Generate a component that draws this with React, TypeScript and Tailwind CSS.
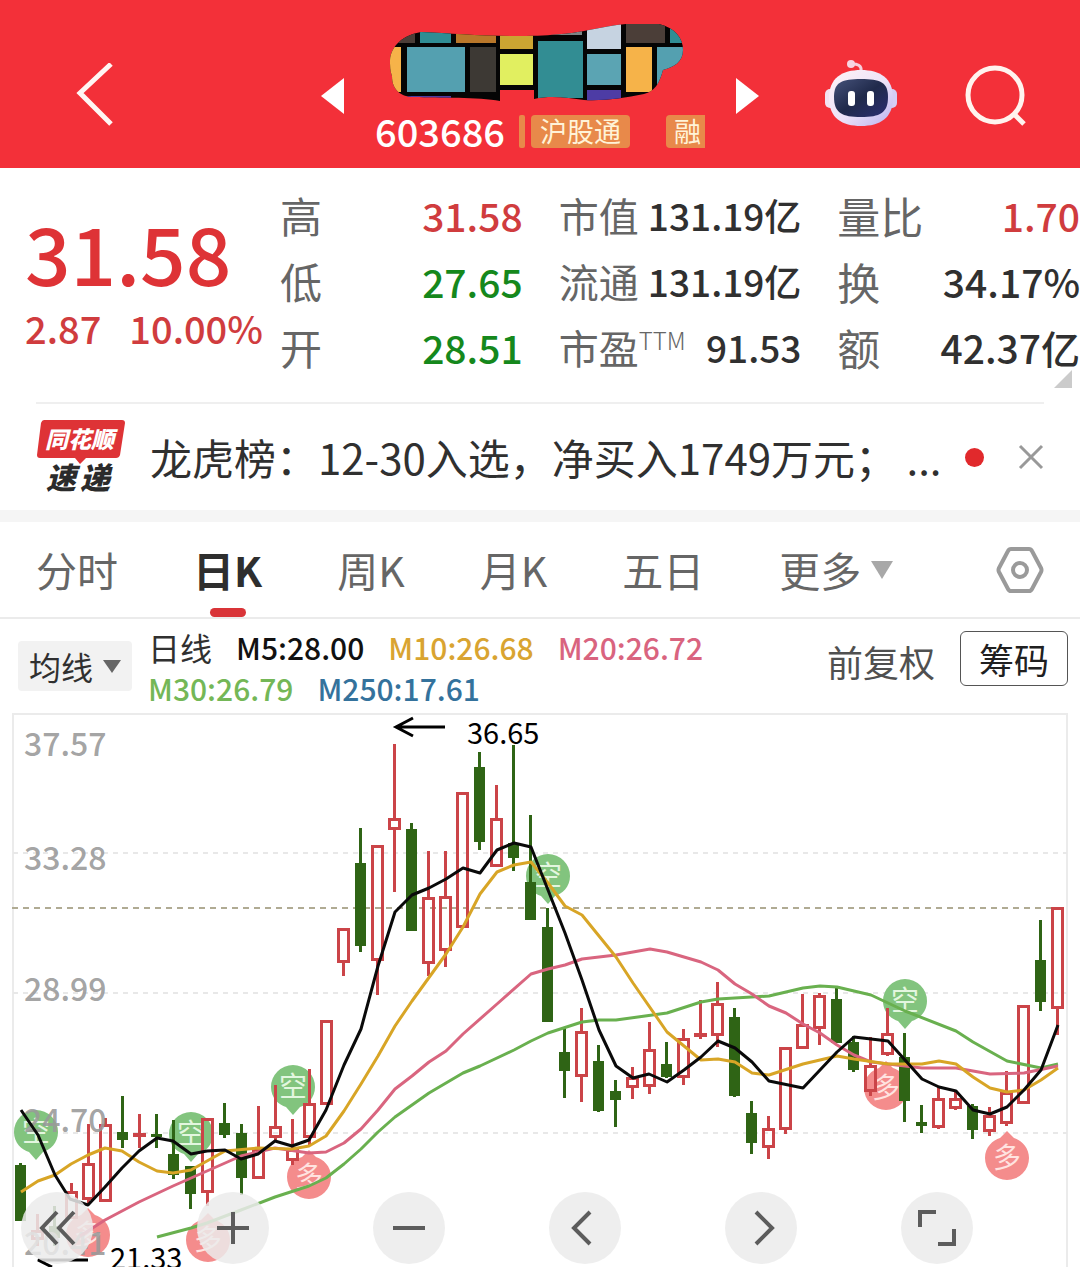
import { useState } from "react";

type Candle = [color: "r" | "g", high: number, top: number, bottom: number, low: number];

const candles: Candle[] = [
  ["g", 1163, 1165, 1221, 1221],
  ["r", 1214, 1230, 1240, 1246],
  ["g", 1206, 1226, 1238, 1246],
  ["r", 1183, 1191, 1219, 1219],
  ["r", 1124, 1163, 1200, 1204],
  ["r", 1118, 1124, 1202, 1202],
  ["g", 1096, 1132, 1140, 1148],
  ["r", 1114, 1133, 1137, 1148],
  ["g", 1114, 1134, 1137, 1148],
  ["g", 1120, 1154, 1175, 1179],
  ["g", 1166, 1166, 1194, 1209],
  ["r", 1118, 1118, 1193, 1206],
  ["g", 1103, 1123, 1135, 1138],
  ["g", 1124, 1133, 1178, 1195],
  ["r", 1106, 1148, 1179, 1179],
  ["r", 1085, 1126, 1138, 1140],
  ["r", 1119, 1149, 1161, 1165],
  ["r", 1069, 1103, 1138, 1146],
  ["r", 1020, 1020, 1105, 1105],
  ["r", 928, 928, 963, 976],
  ["g", 828, 863, 946, 952],
  ["r", 845, 845, 961, 995],
  ["r", 744, 818, 830, 892],
  ["g", 823, 829, 931, 931],
  ["r", 851, 897, 964, 976],
  ["r", 851, 896, 951, 967],
  ["r", 792, 792, 928, 928],
  ["g", 752, 767, 842, 850],
  ["r", 785, 818, 867, 867],
  ["g", 745, 843, 858, 871],
  ["g", 815, 882, 920, 920],
  ["g", 908, 927, 1022, 1022],
  ["g", 1028, 1052, 1071, 1098],
  ["r", 1008, 1031, 1077, 1102],
  ["g", 1045, 1061, 1111, 1112],
  ["g", 1080, 1091, 1100, 1127],
  ["r", 1067, 1077, 1088, 1099],
  ["r", 1022, 1049, 1087, 1094],
  ["g", 1042, 1064, 1077, 1078],
  ["r", 1029, 1038, 1078, 1085],
  ["r", 1000, 1033, 1037, 1039],
  ["r", 982, 1003, 1036, 1047],
  ["g", 1008, 1017, 1096, 1097],
  ["g", 1101, 1113, 1143, 1154],
  ["r", 1116, 1128, 1148, 1159],
  ["r", 1047, 1047, 1130, 1134],
  ["r", 994, 1024, 1049, 1049],
  ["r", 993, 995, 1029, 1045],
  ["g", 988, 999, 1043, 1043],
  ["g", 1036, 1042, 1070, 1072],
  ["r", 1037, 1065, 1092, 1096],
  ["r", 1008, 1033, 1055, 1056],
  ["g", 1033, 1057, 1101, 1122],
  ["g", 1105, 1122, 1126, 1133],
  ["r", 1087, 1098, 1128, 1129],
  ["r", 1090, 1098, 1109, 1110],
  ["g", 1104, 1106, 1130, 1139],
  ["r", 1107, 1115, 1132, 1136],
  ["r", 1071, 1092, 1124, 1126],
  ["r", 1005, 1005, 1104, 1104],
  ["g", 920, 960, 1002, 1011],
  ["r", 907, 907, 1009, 1035],
];

const averages = [
  {
    color: "#69b04f",
    points:
      "157,1237 191,1228 207,1223 241,1210 275,1197 309,1186 326,1178 344,1164 361,1149 378,1132 395,1117 429,1093 463,1073 480,1066 514,1050 531,1041 548,1033 582,1022 599,1020 616,1020 667,1013 701,1002 718,999 769,996 803,988 820,986 837,987 871,995 905,1011 956,1031 973,1042 1007,1061 1041,1068 1058,1064",
  },
  {
    color: "#d9657f",
    points:
      "80,1236 105,1220 139,1202 173,1186 207,1171 241,1156 275,1148 309,1153 326,1152 344,1143 361,1129 378,1110 395,1089 412,1076 429,1062 446,1051 463,1034 497,1004 531,974 548,969 565,965 582,959 616,955 650,949 667,952 701,962 718,970 735,984 752,994 769,1006 786,1013 803,1024 820,1033 837,1045 854,1055 871,1062 905,1066 922,1068 956,1068 990,1074 1024,1073 1058,1066",
  },
  {
    color: "#d8a526",
    points:
      "21,1192 38,1181 55,1175 71,1164 88,1155 105,1148 122,1151 139,1162 157,1171 173,1173 191,1170 207,1161 225,1151 258,1148 292,1149 309,1146 326,1136 344,1111 361,1084 378,1056 395,1026 412,1001 446,954 463,927 480,894 497,872 514,865 531,862 548,883 565,906 582,915 599,936 616,957 633,983 667,1032 684,1046 701,1060 718,1059 735,1062 752,1073 769,1075 803,1064 820,1060 837,1056 854,1059 888,1064 922,1064 939,1061 956,1064 973,1077 990,1088 1007,1092 1024,1090 1041,1080 1058,1068",
  },
  {
    color: "#0a0a0a",
    points:
      "21,1110 38,1135 55,1175 70,1199 88,1205 105,1187 122,1168 139,1151 157,1138 173,1141 191,1154 207,1151 225,1150 241,1159 258,1154 275,1141 292,1146 309,1140 326,1110 344,1065 361,1029 378,966 395,912 412,895 429,888 446,879 463,868 480,873 497,850 514,843 531,847 548,890 565,933 582,980 599,1030 616,1066 633,1078 649,1074 667,1082 684,1070 701,1057 718,1041 735,1048 752,1062 769,1081 803,1088 820,1070 837,1052 854,1037 888,1041 905,1060 922,1079 939,1087 956,1091 973,1110 990,1114 1007,1107 1024,1090 1041,1070 1058,1025",
  },
];

const shortPins = [
  [36, 1132],
  [191, 1134],
  [293, 1087],
  [548, 876],
  [905, 1001],
];

const longPins = [
  [88, 1235],
  [208, 1240],
  [309, 1177],
  [886, 1088],
  [1007, 1158],
];

const axisLabels: [string, number][] = [
  ["37.57", 756],
  ["33.28", 870],
  ["28.99", 1001],
  ["24.70", 1132],
  ["20.41", 1255],
];

const quoteColumns = [
  {
    labelClass: "text-[42px]",
    valueClass: "text-[39px]",
    rows: [
      { label: "高", value: "31.58", color: "text-[#d03c3e]" },
      { label: "低", value: "27.65", color: "text-[#15881c]" },
      { label: "开", value: "28.51", color: "text-[#15881c]" },
    ],
  },
  {
    labelClass: "text-[40px]",
    valueClass: "text-[37px]",
    rows: [
      { label: "市值", value: "131.19亿", color: "text-[#303030]" },
      { label: "流通", value: "131.19亿", color: "text-[#303030]" },
      { label: "市盈", sup: "TTM", value: "91.53", color: "text-[#303030]" },
    ],
  },
  {
    labelClass: "text-[43px]",
    valueClass: "text-[39px]",
    rows: [
      { label: "量比", value: "1.70", color: "text-[#d03c3e]" },
      { label: "换", value: "34.17%", color: "text-[#303030]" },
      { label: "额", value: "42.37亿", color: "text-[#303030]" },
    ],
  },
];

const legend = [
  { text: "M5:28.00", color: "text-[#111111]" },
  { text: "M10:26.68", color: "text-[#d9a431]" },
  { text: "M20:26.72", color: "text-[#d9647f]" },
  { text: "M30:26.79", color: "text-[#74b757]" },
  { text: "M250:17.61", color: "text-[#34729c]" },
];

const tabs = ["分时", "日K", "周K", "月K", "五日"];

const NameMosaic = () => (
  <svg className="ml-[14px] block" width="296" height="78" viewBox="390 24 296 78">
    <clipPath id="blob">
      <path d="M391 60C392 46 404 35 422 32C450 33 480 36 515 36C550 36 570 34 590 30C615 25 640 21 660 24C676 28 684 38 684 50C684 62 675 67 664 70C660 84 656 91 645 94C625 98 605 101 585 100C570 98 552 95 535 99V90H501V101C480 97 440 98 415 97C402 97 393 90 393 76C391 71 391 66 391 60Z" />
    </clipPath>
    <g clipPath="url(#blob)">
      <rect x="390" y="22" width="296" height="80" fill="#050505" />
      <rect x="390" y="22" width="26" height="21" fill="#4b3e38" />
      <rect x="421" y="22" width="31" height="21" fill="#2f8d94" />
      <rect x="457" y="22" width="40" height="21" fill="#b9772a" />
      <rect x="501" y="22" width="33" height="27" fill="#cba432" />
      <rect x="539" y="22" width="44" height="13" fill="#7d8585" />
      <rect x="588" y="22" width="34" height="27" fill="#c6d3e1" />
      <rect x="627" y="22" width="39" height="21" fill="#4b3e38" />
      <rect x="671" y="22" width="15" height="21" fill="#2f8d94" />
      <rect x="390" y="47" width="12" height="45" fill="#f6b349" />
      <rect x="408" y="47" width="58" height="45" fill="#54a0b0" />
      <rect x="471" y="47" width="26" height="45" fill="#3d3934" />
      <rect x="501" y="54" width="33" height="31" fill="#e1ef60" />
      <rect x="539" y="41" width="45" height="57" fill="#328d93" />
      <rect x="588" y="54" width="34" height="31" fill="#5ba4b3" />
      <rect x="588" y="90" width="34" height="12" fill="#4d3ca5" />
      <rect x="627" y="47" width="26" height="45" fill="#f6b349" />
      <rect x="658" y="47" width="28" height="45" fill="#54a0b0" />
      <rect x="408" y="96" width="44" height="6" fill="#4d3ca5" />
    </g>
  </svg>
);

const RobotIcon = () => (
  <svg width="73" height="72" viewBox="824 60 73 72">
    <defs>
      <linearGradient id="shell" x1="0" y1="0" x2="1" y2="1">
        <stop offset="0" stopColor="#fff3f6" />
        <stop offset="0.55" stopColor="#ece2f8" />
        <stop offset="1" stopColor="#b9b1ef" />
      </linearGradient>
      <linearGradient id="visor" x1="0" y1="0" x2="1" y2="1">
        <stop offset="0" stopColor="#46527a" />
        <stop offset="0.5" stopColor="#202a4b" />
        <stop offset="1" stopColor="#2b2d72" />
      </linearGradient>
    </defs>
    <path d="M861 71C862 65 857 64 852 64" fill="none" stroke="#f7cfdc" strokeWidth="3" />
    <circle cx="851" cy="64" r="4" fill="#f7d5e2" />
    <rect x="825" y="89" width="12" height="19" rx="5" fill="#f3e2f1" />
    <rect x="885" y="89" width="12" height="19" rx="5" fill="#d5cdf4" />
    <path d="M829 98C829 78 842 70 861 70C880 70 893 78 893 98C893 118 880 126 861 126C842 126 829 118 829 98Z" fill="url(#shell)" />
    <path d="M834 97C834 82 842 79 861 79C880 79 888 82 888 97C888 113 880 117 861 117C842 117 834 113 834 97Z" fill="url(#visor)" />
    <rect x="848" y="91" width="7" height="15" rx="3" fill="#fff" />
    <rect x="867" y="91" width="7" height="15" rx="3" fill="#fff" />
  </svg>
);

const Header = () => (
  <header className="grid h-[168px] grid-cols-[1fr_auto_1fr] items-center bg-[#f33039] pt-6 text-white">
    <button aria-label="返回" className="ml-[76px] justify-self-start">
      <svg width="38" height="66" viewBox="0 0 38 66" fill="none" stroke="#fff6f4" strokeWidth="5">
        <path d="M35 1L4 30L35 61" />
      </svg>
    </button>
    <div className="flex items-center gap-[30px] self-stretch">
      <button aria-label="上一只">
        <svg width="24" height="36" viewBox="0 0 24 36" fill="#fff">
          <path d="M0 18L23 0V36Z" />
        </svg>
      </button>
      <div className="w-[330px] self-start">
        <NameMosaic />
        <div className="flex items-center text-[38px] leading-[58px] font-medium">
          <span className="w-[144px]">603686</span>
          <span className="h-[33px] w-[6px] rounded-xs bg-[#e8894a]" />
          <span className="ml-[6px] h-[33px] rounded-sm bg-[#e8894a] px-[9px] text-[27px] leading-[32px] font-normal text-[#fff3d8]">
            沪股通
          </span>
          <span className="ml-auto h-[33px] rounded-l-sm bg-[#e8894a] pr-[4px] pl-[8px] text-[27px] leading-[32px] font-normal text-[#fff3d8]">
            融
          </span>
        </div>
      </div>
      <button aria-label="下一只">
        <svg width="24" height="36" viewBox="0 0 24 36" fill="#fff">
          <path d="M24 18L1 0V36Z" />
        </svg>
      </button>
    </div>
    <div className="mr-[53px] flex items-center gap-[68px] justify-self-end">
      <button aria-label="智能助手">
        <RobotIcon />
      </button>
      <button aria-label="搜索">
        <svg width="62" height="62" viewBox="0 0 62 62" fill="none" stroke="#fff3ee" strokeWidth="5">
          <circle cx="30" cy="30" r="27" />
          <path d="M49 49L59 59" />
        </svg>
      </button>
    </div>
  </header>
);

const Quote = () => (
  <section className="relative flex pt-[14px] pb-[22px]">
    <div className="w-[280px] shrink-0 pl-[25px] font-medium text-[#d03c3e]">
      <p className="pt-[20px] text-[80px] leading-[98px] text-[#de3336]">31.58</p>
      <p className="flex gap-7 text-[38px] leading-[56px]">
        <span>2.87</span>
        <span>10.00%</span>
      </p>
    </div>
    <div className="flex flex-1 gap-9">
      {quoteColumns.map((column) => (
        <dl key={column.rows[0].label} className="flex-1">
          {column.rows.map((row) => (
            <div key={row.label} className="flex justify-between leading-[66px] whitespace-nowrap">
              <dt className={`${column.labelClass} flex text-[#666666]`}>
                {row.label}
                {row.sup && <span className="text-[24px] leading-[52px] font-light">{row.sup}</span>}
              </dt>
              <dd className={`${column.valueClass} ${row.color} font-medium`}>{row.value}</dd>
            </div>
          ))}
        </dl>
      ))}
    </div>
    <svg className="absolute right-2 bottom-[14px]" width="18" height="18" viewBox="0 0 18 18" fill="#cbcbcb">
      <path d="M18 0V18H0Z" />
    </svg>
  </section>
);

const News = () => (
  <section className="mx-9 flex h-[108px] items-center border-t-2 border-[#efefef]">
    <svg className="shrink-0 overflow-visible" width="90" height="76" viewBox="36 419 90 76">
      <path d="M44 420H122Q125 420 125 423L120 455Q119 458 116 458H86L80 464L75 458H40Q37 458 37 455L41 423Q42 420 44 420Z" fill="#de3336" />
      <text x="45" y="448" fontSize="23" fontWeight="900" fontStyle="italic" fill="#fff">
        同花顺
      </text>
      <text x="46" y="489" fontSize="30" fontWeight="900" fontStyle="italic" fill="#2b2b2b">
        速
      </text>
      <text x="80" y="489" fontSize="30" fontWeight="900" fontStyle="italic" fill="#2b2b2b">
        递
      </text>
    </svg>
    <a href="#news" className="ml-6 flex-1 truncate text-[42px] leading-[60px] text-[#303030]">
      龙虎榜：12-30入选，净买入1749万元； ...
    </a>
    <span className="size-[19px] shrink-0 rounded-full bg-[#e1292c]" />
    <button aria-label="关闭" className="ml-[34px]">
      <svg width="26" height="26" viewBox="0 0 26 26" stroke="#999" strokeWidth="3">
        <path d="M2 2L24 24M24 2L2 24" />
      </svg>
    </button>
  </section>
);

const Tabs = () => {
  const [active, setActive] = useState("日K");

  return (
    <nav className="flex h-[97px] items-center gap-[75px] border-b-2 border-[#ebebeb] px-9 text-[41px] text-[#666666]">
      {tabs.map((tab) => (
        <button
          key={tab}
          onClick={() => setActive(tab)}
          className={tab === active ? "relative h-full font-bold text-[#2e2e2e]" : "h-full"}
        >
          {tab}
          {tab === active && (
            <span className="absolute bottom-0 left-1/2 h-[9px] w-9 -translate-x-1/2 rounded-full bg-[#d93438]" />
          )}
        </button>
      ))}
      <button className="flex h-full items-center gap-[9px]">
        更多
        <svg width="24" height="20" viewBox="0 0 24 20" fill="#a8a8a8">
          <path d="M1 1H23L12 19Z" />
        </svg>
      </button>
      <button aria-label="设置" className="ml-auto">
        <svg width="48" height="48" viewBox="0 0 48 48" fill="none" stroke="#9a9a9a" strokeWidth="4" strokeLinejoin="round">
          <path d="M15 3H33Q35 3 36 5L45 22Q46 24 45 26L36 43Q35 45 33 45H15Q13 45 12 43L3 26Q2 24 3 22L12 5Q13 3 15 3Z" />
          <circle cx="24" cy="24" r="7" />
        </svg>
      </button>
    </nav>
  );
};

const Indicators = () => (
  <section className="flex h-[94px] items-start pr-3 pl-[18px]">
    <button className="mt-[22px] flex h-[50px] w-[114px] shrink-0 items-center justify-center gap-[10px] rounded-sm bg-[#f2f2f2] text-[32px] text-[#303030]">
      均线
      <svg width="18" height="13" viewBox="0 0 18 13" fill="#666">
        <path d="M0 0H18L9 13Z" />
      </svg>
    </button>
    <div className="ml-4 flex max-w-[600px] flex-wrap gap-x-6 pt-2 text-[30px] leading-[41px] font-medium">
      <span className="text-[32px] font-normal text-[#303030]">日线</span>
      {legend.map((item) => (
        <span key={item.text} className={item.color}>
          {item.text}
        </span>
      ))}
    </div>
    <button className="mt-[15px] ml-auto text-[36px] leading-[54px] text-[#505050]">前复权</button>
    <button className="mt-[12px] ml-[25px] h-[55px] w-[108px] rounded-md border border-[#555555] text-[35px] leading-[50px] text-[#202020]">
      筹码
    </button>
  </section>
);

const controls = [
  { label: "最早", path: "M54 20L39 36L54 52M71 20L56 36L71 52", box: "18 0 72 72" },
  { label: "放大", path: "M20 36H52M36 20V52", box: "0 0 72 72" },
  { label: "缩小", path: "M20 36H52", box: "0 0 72 72" },
  { label: "左移", path: "M41 20L25 36L41 52", box: "0 0 72 72" },
  { label: "右移", path: "M31 20L47 36L31 52", box: "0 0 72 72" },
  { label: "全屏", path: "M19 35V20H35M53 37V52H37", box: "0 0 72 72" },
];

const Chart = () => (
  <section className="relative">
    <svg className="block w-full overflow-visible" viewBox="0 713 1080 554">
      <path d="M13 1267V714H1067V1267" fill="none" stroke="#ebebeb" strokeWidth="2" />
      <path d="M13 853H1067M13 993H1067M13 1133H1067" stroke="#e8e8e8" strokeWidth="2" strokeDasharray="5 5" />
      {shortPins.map(([x, y]) => (
        <g key={`${x}-${y}`} transform={`translate(${x} ${y})`}>
          <path d="M-22 0A22 22 0 1 1 22 0C22 11 14 18 7 20L0 28L-7 20C-14 18 -22 11 -22 0Z" fill="#82c47e" />
          <text y="10" fontSize="28" textAnchor="middle" fill="#e3f6df">
            空
          </text>
        </g>
      ))}
      {longPins.map(([x, y]) => (
        <g key={`${x}-${y}`} transform={`translate(${x} ${y})`}>
          <path d="M-22 0A22 22 0 1 0 22 0C22 -11 14 -18 7 -20L0 -27L-7 -20C-14 -18 -22 -11 -22 0Z" fill="#f48c8c" />
          <text y="10" fontSize="28" textAnchor="middle" fill="#ffe3e0">
            多
          </text>
        </g>
      ))}
      <path d="M12 908H1052" stroke="#b0ab93" strokeWidth="2" strokeDasharray="6 5" />
      {candles.map(([color, high, top, bottom, low], i) => {
        const x = 20.5 + i * 17;
        const height = bottom - top;
        if (color === "g") {
          return (
            <g key={i} fill="#2f6415">
              <rect x={x - 1.5} y={high} width="3" height={low - high} />
              <rect x={x - 5.5} y={top} width="11" height={height} />
            </g>
          );
        }
        return (
          <g key={i} fill="#cb4448">
            <rect x={x - 1.5} y={high} width="3" height={top - high} />
            <rect x={x - 1.5} y={bottom} width="3" height={low - bottom} />
            {height < 6 ? (
              <rect x={x - 6.5} y={top} width="13" height={height} />
            ) : (
              <rect x={x - 5} y={top + 1.5} width="10" height={height - 3} fill="none" stroke="#cb4448" strokeWidth="3" />
            )}
          </g>
        );
      })}
      {axisLabels.map(([text, y]) => (
        <text key={text} x="24" y={y} fontSize="32" fontWeight="500" fill="#999" fillOpacity="0.9">
          {text}
        </text>
      ))}
      {averages.map((line) => (
        <polyline key={line.color} points={line.points} fill="none" stroke={line.color} strokeWidth="3" strokeLinejoin="round" />
      ))}
      <path d="M445 727H396M413 718L396 727L413 736" fill="none" stroke="#000" strokeWidth="3" />
      <path d="M88 1260H38L52 1267" fill="none" stroke="#000" strokeWidth="3" />
      <text x="467" y="744" fontSize="29" fill="#000">
        36.65
      </text>
      <text x="110" y="1269" fontSize="29" fill="#000">
        21.33
      </text>
    </svg>
    <div className="absolute bottom-[3px] left-[21px] flex gap-[104px]">
      {controls.map((control) => (
        <button key={control.label} aria-label={control.label} className="size-[72px] rounded-full bg-[#ebebeb]/85">
          <svg width="72" height="72" viewBox={control.box} fill="none" stroke="#5c5c5c" strokeWidth="4">
            <path d={control.path} />
          </svg>
        </button>
      ))}
    </div>
  </section>
);

const App = () => {
  return (
    <div className="w-full overflow-hidden bg-white font-['Noto_Sans_CJK_SC',sans-serif]">
      <Header />
      <Quote />
      <News />
      <div className="h-3 bg-[#f5f5f5]" />
      <Tabs />
      <Indicators />
      <Chart />
    </div>
  );
};

export default App;
